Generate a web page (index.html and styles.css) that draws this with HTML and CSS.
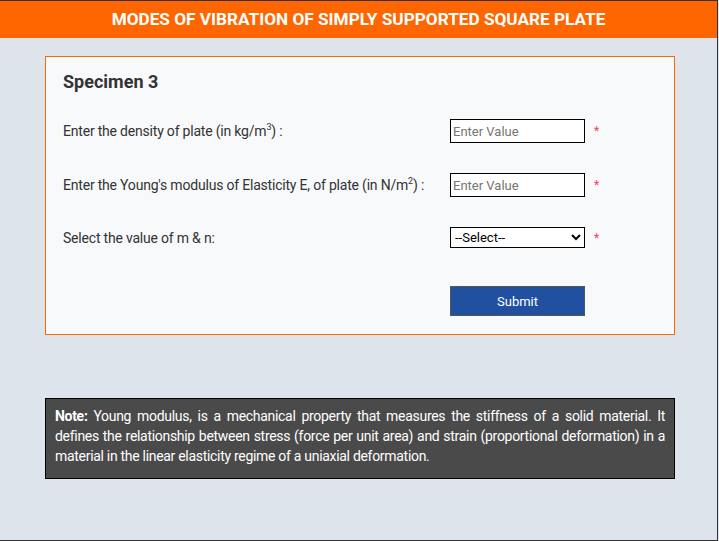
FILE: index.html
```html
<!DOCTYPE html>
<html>
	<head>
		<meta charset="UTF-8">
		<title>Modes of Vibration</title>
		<link rel="stylesheet" href="styles.css">
	</head>
	<body>
		<div class="page">
			<div class="header">MODES OF VIBRATION OF SIMPLY SUPPORTED SQUARE PLATE</div>

			<div class="card">
				<h3 class="title">Specimen 3</h3>
				<div class="row">
					<label>Enter the density of plate (in kg/m<sup>3</sup>) :</label>
					<input type="text" placeholder="Enter Value">
					<span class="req">*</span>
				</div>
				<div class="row">
					<label>Enter the Young's modulus of Elasticity E, of plate (in N/m<sup>2</sup>) :</label>
					<input type="text" placeholder="Enter Value">
					<span class="req">*</span>
				</div>
				<div class="row">
					<label>Select the value of m &amp; n:</label>
					<select>
						<option>--Select--</option>
					</select>
					<span class="req">*</span>
				</div>
				<div class="row row-btn">
					<span></span>
					<button type="button">Submit</button>
				</div>
			</div>

			<div class="note">
				<p><b>Note:</b> Young modulus, is a mechanical property that measures the stiffness of a solid material. It defines the relationship between stress (force per unit area) and strain (proportional deformation) in a material in the linear elasticity regime of a uniaxial deformation.</p>
			</div>
		</div>
	</body>
</html>
```

FILE: styles.css
```css
*{
	padding:0;
	margin:0;
	box-sizing: border-box;
}
body{
	background: #dee4eb;
	font-family: Roboto, "Liberation Sans", sans-serif;
	color: #333;
}
.page{
	width:718px;
	height:541px;
	border-top:1px solid #333;
	border-right:1px solid #333;
	border-bottom:1px solid #333;
	background: #dee4eb;
}
.header{
	height:37px;
	background: #ff6600;
	color:#fff;
	font-size:17.2px;
	font-weight: 700;
	line-height:37px;
	text-align: center;
}
.card{
	margin:18px 0 0 45px;
	width:630px;
	height:279px;
	border:1px solid #ff6600;
	background: #f8f9fb;
	padding:14px 17px 18px;
}
.card .title{
	font-size:18px;
	font-weight: 700;
	line-height:21px;
	margin-bottom:27px;
}
.row{
	display: grid;
	grid-template-columns: 387px 135px auto;
	align-items: center;
	font-size:14px;
	letter-spacing: -0.2px;
	margin-bottom:30px;
}
.row sup{
	font-size:9px;
	line-height:0;
}
.row input{
	width:135px;
	height:24px;
	border:1px solid #000;
	background: #fff;
	padding:0 2px;
	font-family: Roboto, "Liberation Sans", sans-serif;
	font-size:13px;
	color:#000;
	outline: none;
}
.row input::placeholder{
	color:#757575;
}
.row select{
	width:135px;
	height:21px;
	border:1px solid #000;
	background: #fff;
	font-family: Roboto, "Liberation Sans", sans-serif;
	font-size:13px;
	color:#000;
	border-radius: 0;
}
.req{
	color:#f04060;
	font-size:12px;
	margin-left:9px;
}
.row-btn{
	margin-top:38px;
	margin-bottom:0;
}
.row-btn button{
	width:135px;
	height:30px;
	background: #2150a0;
	border:1px solid #555;
	color:#fff;
	font-family: Roboto, "Liberation Sans", sans-serif;
	font-size:13px;
	letter-spacing: 0;
}
.note{
	margin:63px 0 0 45px;
	width:630px;
	height:81px;
	border:1px solid #000;
	background: #4a4a4a;
	color:#fff;
	padding:7px 9px 0;
	font-size:14px;
	letter-spacing: -0.3px;
	line-height:20px;
	text-align: justify;
}
```
